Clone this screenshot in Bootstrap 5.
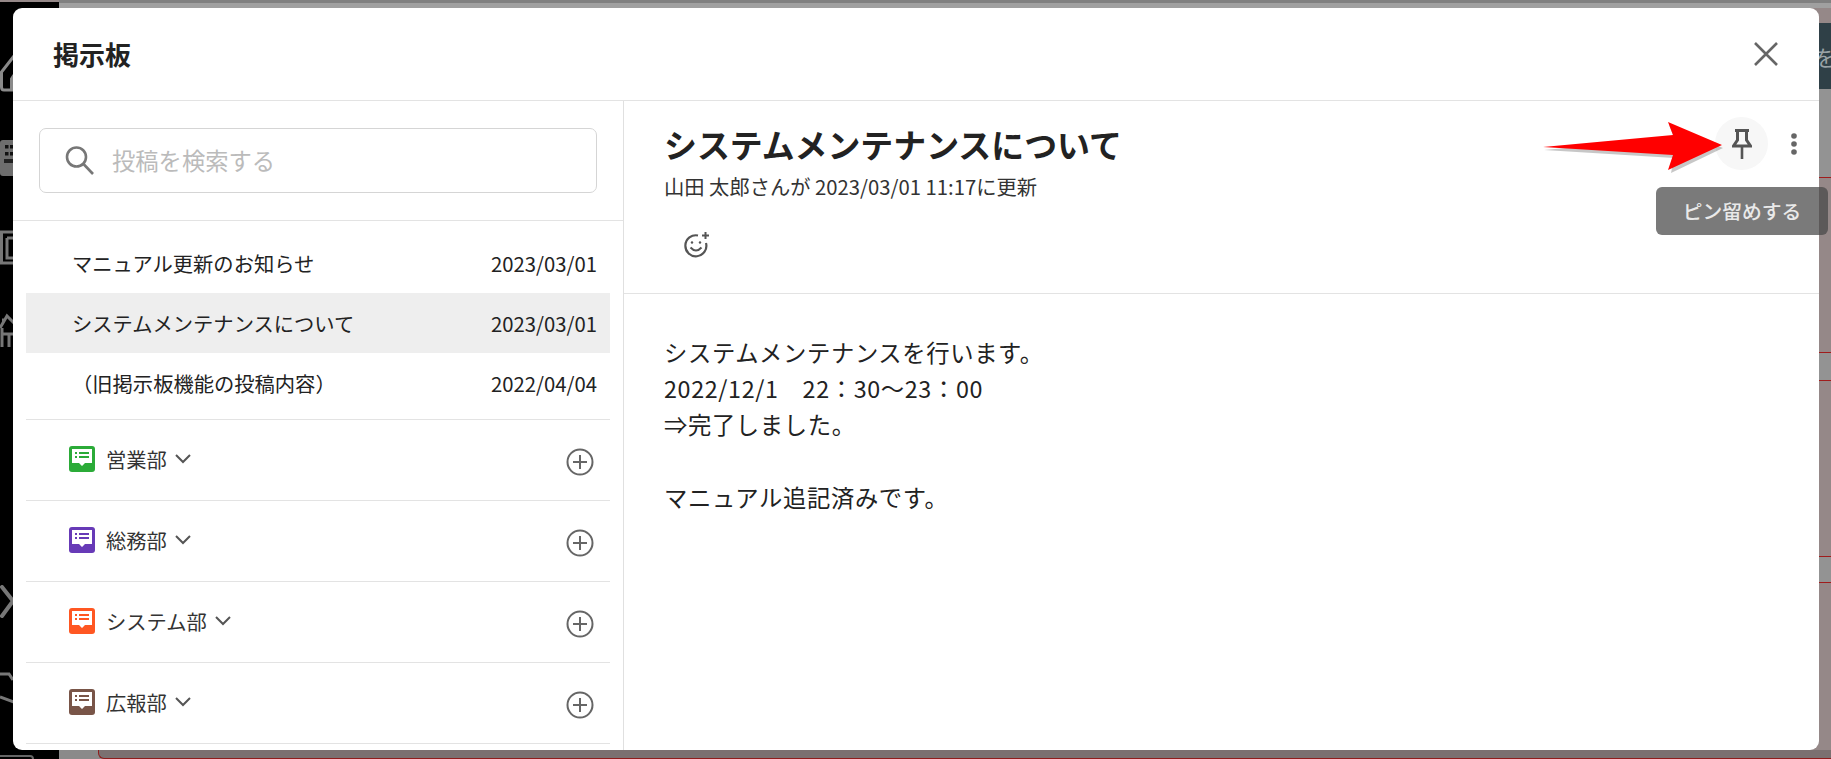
<!DOCTYPE html>
<html lang="ja">
<head>
  <meta charset="UTF-8">
  <meta name="viewport" content="width=device-width, initial-scale=1">
  <title>掲示板</title>
  <link href="https://cdn.jsdelivr.net/npm/bootstrap@5.3.3/dist/css/bootstrap.min.css" rel="stylesheet">
  <style>
    html, body { height: 100%; overflow: hidden; }
    body {
      background: #958888;
      font-family: "Noto Sans CJK JP", "Noto Sans", sans-serif;
      color: #222;
    }
    /* 背景のアプリ（暗くなっている部分） */
    .bg-side { position: absolute; left: 0; top: 2px; bottom: 0; width: 59px; background: #000; }
    .bg-side svg { position: absolute; left: 0; }
    .bg-top { position: absolute; left: 59px; right: 0; top: 0; height: 8px; background: #a0a0a0; border-top: 3px solid #808080; }
    .bg-teal { position: absolute; right: 0; top: 23px; width: 12px; height: 66px; background: #2f4047; overflow: hidden; color: #9aa3a6; font-size: 22px; line-height: 66px; white-space: nowrap; }
    .bg-teal span { margin-left: -5px; }
    .bg-plain { position: absolute; right: 0; width: 12px; background: #939393; }
    .bg-line { position: absolute; right: 0; width: 12px; height: 1px; background: #a01c1c; }
    .bg-bottom { position: absolute; left: 59px; right: 0; bottom: 0; height: 9px; background: #8a8a8a; }
    .bg-bottom i { position: absolute; left: 39px; right: 0; bottom: 0; height: 9px; background: #7b7070; border: 1px solid #8f1c1c; border-top: 0; border-right: 0; border-radius: 0 0 0 6px; }

    .board-modal {
      position: absolute; left: 13px; top: 8px; width: 1806px; height: 742px;
      background: #fff; border-radius: 9px; overflow: hidden;
    }
    .board-head { height: 93px; border-bottom: 1px solid #e3e3e3; padding-left: 40px; padding-right: 41px; }
    .board-head h1 { font-size: 26px; font-weight: 700; margin: 0; line-height: 1; }
    .board-body { height: 649px; }
    .board-left { width: 611px; border-right: 1px solid #e0e0e0; flex: none; }
    .search-wrap { height: 120px; padding: 27px 26px 0; border-bottom: 1px solid #e3e3e3; }
    .search-box { height: 65px; border: 1px solid #d5d5d5; border-radius: 7px; padding-left: 25px; gap: 18px; }
    .search-box span { font-size: 23.3px; color: #bbb; }
    .post-list { padding: 12px 13px 0; }
    .post-row { height: 60px; padding: 0 13px 0 46px; font-size: 20.3px; }
    .post-row.on { background: #eee; }
    .post-row.last { margin-bottom: 6px; }
    .group-row {
      height: 81px; margin: 0 13px; border-top: 1px solid #e3e3e3; padding: 0 16px 0 43px;
      font-size: 20.3px;
    }
    .group-row .gname { margin-left: 11px; margin-right: 8px; color: #333; position: relative; top: -1px; }
    .group-row .gchev { position: relative; top: -1px; }
    .group-row .gicon { position: relative; top: -1px; }
    .group-row .gplus { position: relative; top: 2px; }
    .board-right { min-width: 0; }
    .post-head { height: 193px; border-bottom: 1px solid #e3e3e3; padding: 21px 40px 0; }
    .post-head h2 { font-size: 32.9px; font-weight: 700; line-height: 44px; margin: 0; }
    .post-meta { font-size: 20.3px; line-height: 30px; margin-top: 5px; color: #333; }
    .react-btn { margin: 31px 0 0 20px; line-height: 0; }
    .post-text { padding: 40px 40px; font-size: 23.3px; line-height: 36.2px; letter-spacing: .65px; white-space: pre-wrap; }
    .pin-btn {
      position: absolute; left: 1702px; top: 109px; width: 53px; height: 53px; background: #f7f7f7;
      border-radius: 50%;
    }
    .kebab { position: absolute; left: 1777px; top: 125px; }
    .pin-tip {
      position: absolute; left: 1656px; top: 187px; width: 172px; height: 48px; border-radius: 6px;
      background: rgba(70, 70, 70, .72); color: #e9e9e9; font-size: 19.8px; font-weight: 500;
    }
    .red-arrow { position: absolute; left: 1540px; top: 115px; }
  </style>
</head>
<body>
  <!-- 背景 -->
  <div class="bg-top"></div>
  <div class="bg-side">
    <svg width="14" height="42" style="top:52px" fill="none" stroke="#8a8a8a" stroke-width="3"><path d="M14 2 1.5 18V33Q1.5 36 4 36H14M14 21 11.5 25V36"/></svg>
    <svg width="14" height="36" style="top:138px"><path d="M0 3Q0 0 3 0H14V36H3Q0 36 0 33Z" fill="#6e6e6e"/><path d="M5 5h3.5v3.5H5zM5 12h3.5v3.5H5zM10 5h4v3.5h-4zM10 12h4v3.5h-4z" fill="#111"/><path d="M4 19h10v4H4z" fill="#222"/></svg>
    <svg width="14" height="36" style="top:228px" fill="none" stroke="#777" stroke-width="3"><path d="M14 2H1.5V33H14M7 8V28H14M7 8H14"/></svg>
    <svg width="14" height="38" style="top:308px" fill="none" stroke="#777" stroke-width="3"><path d="M0 18 7 6 14 13M2 18V37M9 24V37M2 24H14M2 10H5"/></svg>
    <svg width="14" height="34" style="top:583px" fill="none" stroke="#777" stroke-width="4" stroke-linecap="round"><path d="M2 2 13 16 2 31"/></svg>
    <svg width="14" height="32" style="top:670px" fill="none" stroke="#777" stroke-width="3"><path d="M0 2H9L13 8M0 25 14 30"/></svg>
    <svg width="34" height="4" style="top:753px" fill="none" stroke="#666" stroke-width="2"><path d="M0 1H30Q33 1 33 4"/></svg>
  </div>
  <div class="bg-teal"><span>を</span></div>
  <div class="bg-plain" style="top:89px;height:88px"></div>
  <div class="bg-plain" style="top:352px;height:28px"></div>
  <div class="bg-plain" style="top:556px;height:26px"></div>
  <div class="bg-line" style="top:177px"></div>
  <div class="bg-line" style="top:352px"></div>
  <div class="bg-line" style="top:380px"></div>
  <div class="bg-line" style="top:556px"></div>
  <div class="bg-line" style="top:582px"></div>
  <div class="bg-bottom"><i></i></div>

  <div class="board-modal d-flex flex-column">
    <div class="board-head d-flex align-items-center justify-content-between">
      <h1>掲示板</h1>
      <svg width="24" height="24" viewBox="0 0 24 24" stroke="#666" stroke-width="2.6"><path d="M1 1 23 23M23 1 1 23"/></svg>
    </div>
    <div class="board-body d-flex">
      <div class="board-left">
        <div class="search-wrap">
          <div class="search-box d-flex align-items-center">
            <svg width="29" height="29" viewBox="0 0 29 29" fill="none" stroke="#777" stroke-width="2.6"><circle cx="11.5" cy="11" r="9.5"/><path d="M18.5 18 28 28"/></svg>
            <span>投稿を検索する</span>
          </div>
        </div>
        <div class="post-list">
          <div class="post-row d-flex align-items-center justify-content-between"><span>マニュアル更新のお知らせ</span><span>2023/03/01</span></div>
          <div class="post-row on d-flex align-items-center justify-content-between"><span>システムメンテナンスについて</span><span>2023/03/01</span></div>
          <div class="post-row last d-flex align-items-center justify-content-between"><span>（旧掲示板機能の投稿内容）</span><span>2022/04/04</span></div>
        </div>
        <div class="group-row d-flex align-items-center">
          <svg class="gicon" width="26" height="26" viewBox="0 0 26 26"><rect width="26" height="26" rx="3" fill="#2bab38"/><path d="M3 3H23V17H16L13 20 10 17H3Z" fill="#fff"/><path d="M6 6h2v2H6zM10 6h10v2H10zM6 10h2v2H6zM10 10h10v2H10z" fill="#2bab38"/></svg>
          <span class="gname">営業部</span>
          <svg class="gchev" width="16" height="10" viewBox="0 0 16 10" fill="none" stroke="#555" stroke-width="2"><path d="M1 1 8 8 15 1"/></svg>
          <svg class="gplus ms-auto" width="28" height="28" viewBox="0 0 28 28" fill="none" stroke="#666" stroke-width="2"><circle cx="14" cy="14" r="12.5"/><path d="M14 7V21M7 14H21"/></svg>
        </div>
        <div class="group-row d-flex align-items-center">
          <svg class="gicon" width="26" height="26" viewBox="0 0 26 26"><rect width="26" height="26" rx="3" fill="#673ab7"/><path d="M3 3H23V17H16L13 20 10 17H3Z" fill="#fff"/><path d="M6 6h2v2H6zM10 6h10v2H10zM6 10h2v2H6zM10 10h10v2H10z" fill="#673ab7"/></svg>
          <span class="gname">総務部</span>
          <svg class="gchev" width="16" height="10" viewBox="0 0 16 10" fill="none" stroke="#555" stroke-width="2"><path d="M1 1 8 8 15 1"/></svg>
          <svg class="gplus ms-auto" width="28" height="28" viewBox="0 0 28 28" fill="none" stroke="#666" stroke-width="2"><circle cx="14" cy="14" r="12.5"/><path d="M14 7V21M7 14H21"/></svg>
        </div>
        <div class="group-row d-flex align-items-center">
          <svg class="gicon" width="26" height="26" viewBox="0 0 26 26"><rect width="26" height="26" rx="3" fill="#ff5722"/><path d="M3 3H23V17H16L13 20 10 17H3Z" fill="#fff"/><path d="M6 6h2v2H6zM10 6h10v2H10zM6 10h2v2H6zM10 10h10v2H10z" fill="#ff5722"/></svg>
          <span class="gname">システム部</span>
          <svg class="gchev" width="16" height="10" viewBox="0 0 16 10" fill="none" stroke="#555" stroke-width="2"><path d="M1 1 8 8 15 1"/></svg>
          <svg class="gplus ms-auto" width="28" height="28" viewBox="0 0 28 28" fill="none" stroke="#666" stroke-width="2"><circle cx="14" cy="14" r="12.5"/><path d="M14 7V21M7 14H21"/></svg>
        </div>
        <div class="group-row d-flex align-items-center">
          <svg class="gicon" width="26" height="26" viewBox="0 0 26 26"><rect width="26" height="26" rx="3" fill="#795548"/><path d="M3 3H23V17H16L13 20 10 17H3Z" fill="#fff"/><path d="M6 6h2v2H6zM10 6h10v2H10zM6 10h2v2H6zM10 10h10v2H10z" fill="#795548"/></svg>
          <span class="gname">広報部</span>
          <svg class="gchev" width="16" height="10" viewBox="0 0 16 10" fill="none" stroke="#555" stroke-width="2"><path d="M1 1 8 8 15 1"/></svg>
          <svg class="gplus ms-auto" width="28" height="28" viewBox="0 0 28 28" fill="none" stroke="#666" stroke-width="2"><circle cx="14" cy="14" r="12.5"/><path d="M14 7V21M7 14H21"/></svg>
        </div>
        <div class="group-row"></div>
      </div>
      <div class="board-right flex-grow-1">
        <div class="post-head">
          <h2>システムメンテナンスについて</h2>
          <div class="post-meta">山田 太郎さんが 2023/03/01 11:17に更新</div>
          <div class="react-btn">
            <svg width="27" height="26" viewBox="0 0 27 26" fill="none" stroke="#555" stroke-width="2.2"><path d="M22 11A10.5 10.5 0 1 1 14 3.5"/><path d="M6.5 15.5Q12 21.5 17.5 15.5" stroke-width="2"/><path d="M21.5 0V7M18 3.5H25" stroke-width="2"/><circle cx="8" cy="10.5" r="1.2" fill="#555" stroke="none"/><circle cx="16" cy="10.5" r="1.2" fill="#555" stroke="none"/></svg>
          </div>
        </div>
        <div class="post-text">システムメンテナンスを行います。
2022/12/1　22：30〜23：00
⇒完了しました。

マニュアル追記済みです。</div>
      </div>
    </div>
    <div class="pin-btn d-flex align-items-center justify-content-center">
      <svg width="20" height="30" viewBox="0 0 20 30" fill="none" stroke="#555" stroke-width="3"><path d="M3 1.5H17M5.5 1.5V11L1.5 17H18.5L14.5 11V1.5"/><path d="M10 17V30" stroke-width="2.6"/></svg>
    </div>
    <svg class="kebab" width="8" height="22" viewBox="0 0 8 22" fill="#666"><circle cx="4" cy="3" r="2.8"/><circle cx="4" cy="11" r="2.8"/><circle cx="4" cy="19" r="2.8"/></svg>
  </div>

  <!-- 注釈の矢印とツールチップ -->
  <svg class="red-arrow" width="190" height="64" viewBox="0 0 190 64">
    <polygon points="3,33 133,21 128,8 182,31 130,56 133,41" fill="#000" opacity=".22" transform="translate(1 2)"/>
    <polygon points="3,32 133,20 128,7 182,30 128,55 133,40" fill="#f00"/>
  </svg>
  <div class="pin-tip d-flex align-items-center justify-content-center">ピン留めする</div>
  <script src="https://cdn.jsdelivr.net/npm/bootstrap@5.3.3/dist/js/bootstrap.bundle.min.js"></script>
</body>
</html>
